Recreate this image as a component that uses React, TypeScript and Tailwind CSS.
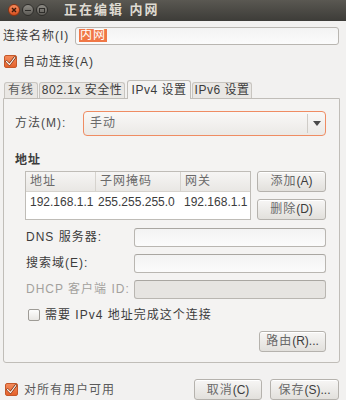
import React from 'react';

const font = { fontFamily: '"Liberation Sans", "Noto Sans CJK SC", sans-serif' };

function Check({ checked }: { checked: boolean }) {
    if (!checked) {
        return (
            <span className="inline-block w-[12px] h-[12px] rounded-[2px] border border-[#9e9b96] bg-gradient-to-b from-[#fdfdfd] to-[#e9e7e4]" />
        );
    }
    return (
        <span className="inline-flex items-center justify-center w-[13px] h-[13px] rounded-[2px] border border-[#c5582a] bg-gradient-to-b from-[#f48a5a] to-[#e5622b]">
            <svg width="11" height="11" viewBox="0 0 11 11">
                <path d="M1.5 5.5 L4.5 8.5 L9.8 1.5" fill="none" stroke="#6b2a10" strokeWidth="2.4" strokeLinecap="round" />
                <path d="M1.5 5.5 L4.5 8.5 L9.8 1.5" fill="none" stroke="#fff3ea" strokeWidth="1.2" strokeLinecap="round" />
            </svg>
        </span>
    );
}

function Btn({ children, w }: { children: React.ReactNode; w: string }) {
    return (
        <div className={`${w} h-[21px] flex items-center justify-center rounded-[3px] border border-[#b5b2ad] bg-gradient-to-b from-[#f7f6f5] to-[#e2e0dc] text-[12px] text-[#3c3c3c] shadow-[inset_0_1px_0_#ffffff] whitespace-nowrap`}>
            {children}
        </div>
    );
}

function Field({ disabled }: { disabled?: boolean }) {
    return (
        <div
            className={`w-[192px] h-[19px] rounded-[3px] border border-[#b9b6b1] border-t-[#a9a6a1] ${
                disabled ? 'bg-[#e6e4e1]' : 'bg-gradient-to-b from-[#f3f3f3] to-[#fbfbfb]'
            }`}
        />
    );
}

export default function App() {
    return (
        <div style={font} className="w-[346px] h-[400px] bg-[#f2f1f0] flex flex-col overflow-hidden text-[12px] text-[#3c3c3c] leading-[14px]">
            {/* title bar */}
            <div className="h-[21px] flex items-center bg-gradient-to-b from-[#5a5852] to-[#3d3c38]">
                <div className="flex items-center gap-[2px] ml-[8px]">
                    <span className="w-[12px] h-[12px] rounded-full bg-gradient-to-b from-[#f58b5c] to-[#d9501f] border border-[#8a3312] flex items-center justify-center">
                        <svg width="6" height="6" viewBox="0 0 6 6">
                            <path d="M1 1 L5 5 M5 1 L1 5" stroke="#3a1a0c" strokeWidth="1.4" />
                        </svg>
                    </span>
                    <span className="w-[12px] h-[12px] rounded-full bg-gradient-to-b from-[#8e8c86] to-[#5d5b56] border border-[#2e2d2a] flex items-center justify-center">
                        <span className="w-[6px] h-[1.5px] bg-[#2e2d2a]" />
                    </span>
                    <span className="w-[12px] h-[12px] rounded-full bg-gradient-to-b from-[#8e8c86] to-[#5d5b56] border border-[#2e2d2a] flex items-center justify-center">
                        <span className="w-[6px] h-[5px] border border-[#2e2d2a]" />
                    </span>
                </div>
                <span className="ml-[16px] text-[13px] font-bold text-[#dfdbd2] tracking-[2px] whitespace-nowrap">正在编辑 内网</span>
            </div>

            {/* connection name */}
            <div className="flex items-center mt-[6px] pl-[3px] pr-[7px]">
                <span className="w-[72px] tracking-[1px] whitespace-nowrap">连接名称(I)</span>
                <div className="flex-1 h-[18px] rounded-[3px] border border-[#b9b6b1] bg-gradient-to-b from-[#f3f3f3] to-[#fbfbfb] flex items-center pl-[3px]">
                    <span className="bg-[#f07746] text-white px-[1px] leading-[13px] tracking-[1px]">内网</span>
                </div>
            </div>

            {/* auto connect */}
            <div className="flex items-center gap-[6px] mt-[10px] pl-[4px]">
                <Check checked />
                <span className="tracking-[1px]">自动连接(A)</span>
            </div>

            {/* tabs */}
            <div className="flex items-end h-[19px] mt-[10px] pl-[4px] whitespace-nowrap">
                <div className="w-[34px] h-[16px] flex items-center justify-center border border-b-0 border-[#c8c5c0] rounded-t-[3px] bg-[#e9e7e4] text-[#5a5a5a] tracking-[1px]">有线</div>
                <div className="ml-[1px] w-[86px] h-[16px] flex items-center justify-center border border-b-0 border-[#c8c5c0] rounded-t-[3px] bg-[#e9e7e4] tracking-[0.5px]">802.1x 安全性</div>
                <div className="ml-[2px] w-[64px] h-[19px] flex items-center justify-center border border-b-0 border-[#c0bdb8] rounded-t-[3px] bg-[#f4f3f2] tracking-[0.5px] relative top-[1px]">IPv4 设置</div>
                <div className="ml-[1px] w-[60px] h-[16px] flex items-center justify-center border border-b-0 border-[#c8c5c0] rounded-t-[3px] bg-[#e9e7e4] tracking-[0.5px]">IPv6 设置</div>
            </div>

            {/* tab panel */}
            <div className="ml-[3px] mr-[6px] h-[266px] border border-[#c0bdb8] rounded-b-[3px] bg-[#f4f3f2] pl-[11px] pr-[13px] pt-[12px] flex flex-col whitespace-nowrap">
                {/* method */}
                <div className="flex items-center">
                    <span className="w-[68px] tracking-[1px] text-[#4a4a4a]">方法(M):</span>
                    <div className="flex-1 h-[25px] rounded-[4px] border border-[#ef8c63] bg-gradient-to-b from-[#f9f8f7] to-[#ebe9e6] flex items-center">
                        <span className="flex-1 pl-[6px] text-[#6a6a6a] tracking-[1px]">手动</span>
                        <span className="w-px h-[19px] bg-[#cfccc7]" />
                        <span className="w-[17px] flex justify-center">
                            <svg width="8" height="5" viewBox="0 0 8 5">
                                <path d="M0 0 H8 L4 5 Z" fill="#4a4a4a" />
                            </svg>
                        </span>
                    </div>
                </div>

                <span className="mt-[17px] font-bold tracking-[1px]">地址</span>

                {/* address table + buttons */}
                <div className="flex mt-[4px] ml-[10px]">
                    <div className="w-[226px] h-[49px] border border-[#bfbcb7] bg-white flex flex-col">
                        <div className="h-[20px] flex border-b border-[#d6d3ce] bg-gradient-to-b from-[#f6f5f4] to-[#e9e7e4] text-[#6a6a6a] tracking-[1px]">
                            <span className="w-[70px] pl-[4px] flex items-center border-r border-[#d6d3ce]">地址</span>
                            <span className="w-[85px] pl-[4px] flex items-center border-r border-[#d6d3ce]">子网掩码</span>
                            <span className="flex-1 pl-[4px] flex items-center">网关</span>
                        </div>
                        <div className="h-[20px] flex items-center">
                            <span className="w-[70px] pl-[4px]">192.168.1.1</span>
                            <span className="w-[85px] pl-[2px]">255.255.255.0</span>
                            <span className="flex-1 pl-[3px]">192.168.1.1</span>
                        </div>
                    </div>
                    <div className="ml-[6px] flex flex-col gap-[7px]">
                        <Btn w="w-[69px]"><span className="tracking-[1px] text-[#6a6a6a]">添加</span>(A)</Btn>
                        <Btn w="w-[69px]"><span className="tracking-[1px] text-[#6a6a6a]">删除</span>(D)</Btn>
                    </div>
                </div>

                {/* dns etc */}
                <div className="flex flex-col gap-[7px] mt-[8px] ml-[11px]">
                    <div className="flex items-center justify-between">
                        <span className="tracking-[1px]">DNS 服务器:</span>
                        <Field />
                    </div>
                    <div className="flex items-center justify-between">
                        <span className="tracking-[1px]">搜索域(E):</span>
                        <Field />
                    </div>
                    <div className="flex items-center justify-between">
                        <span className="tracking-[1px] text-[#a3a19d]">DHCP 客户端 ID:</span>
                        <Field disabled />
                    </div>
                </div>

                <div className="flex items-center gap-[5px] mt-[9px] ml-[13px]">
                    <Check checked={false} />
                    <span className="tracking-[1px]">需要 IPv4 地址完成这个连接</span>
                </div>

                <div className="flex justify-end mt-[9px]">
                    <Btn w="w-[67px]"><span className="tracking-[1px] text-[#6a6a6a]">路由</span>(R)...</Btn>
                </div>
            </div>

            {/* bottom row */}
            <div className="flex items-center mt-[16px] pl-[5px] pr-[7px]">
                <Check checked />
                <span className="ml-[6px] tracking-[1px] text-[#5a5a5a]">对所有用户可用</span>
                <div className="flex-1" />
                <Btn w="w-[68px]"><span className="tracking-[1px] text-[#6a6a6a]">取消</span>(C)</Btn>
                <div className="w-[8px]" />
                <Btn w="w-[69px]"><span className="tracking-[1px] text-[#6a6a6a]">保存</span>(S)...</Btn>
            </div>
        </div>
    );
}
